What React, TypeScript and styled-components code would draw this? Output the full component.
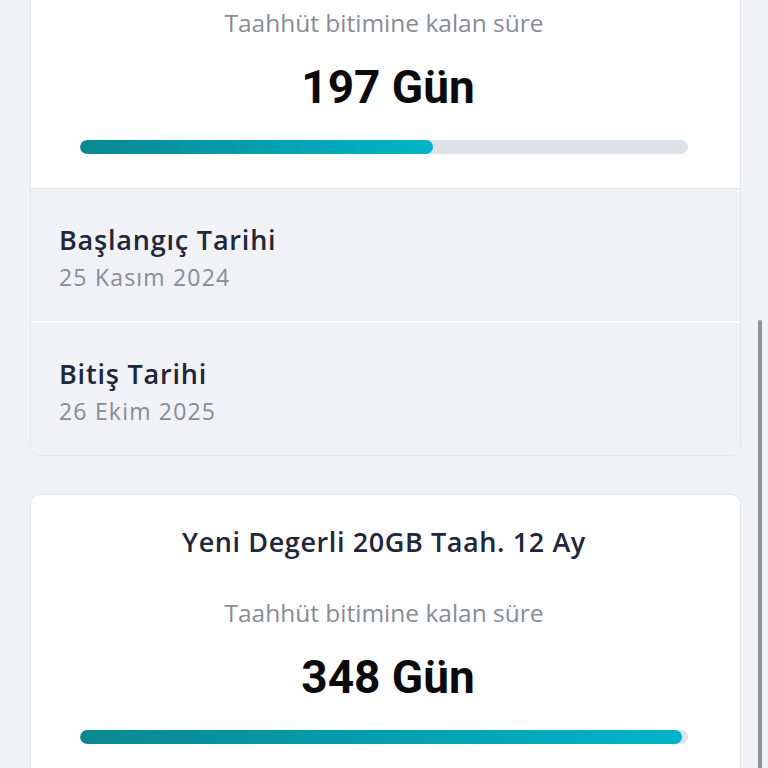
import React from 'react';
import styled, { createGlobalStyle } from 'styled-components';

const GlobalStyle = createGlobalStyle`
  html, body {
    margin: 0;
    padding: 0;
    background: #f0f2f5;
    font-family: 'Open Sans', 'Noto Sans', sans-serif;
    overflow: hidden;
  }
`;

const Page = styled.div`
  position: relative;
  min-height: 100vh;
  padding: 0 27px 40px 30px;
  display: flex;
  flex-direction: column;
  gap: 38px;
`;

const Card = styled.div<{ $clipped?: boolean }>`
  background: #ffffff;
  border: 1px solid #e3e6ec;
  border-radius: ${p => (p.$clipped ? '0 0 10px 10px' : '10px')};
  border-top: ${p => (p.$clipped ? 'none' : '1px solid #e3e6ec')};
  overflow: hidden;
`;

const Summary = styled.div<{ $clipped?: boolean }>`
  display: flex;
  flex-direction: column;
  align-items: center;
  padding: ${p => (p.$clipped ? '7px' : '30px')} 52px 34px 49px;
`;

const PlanTitle = styled.div`
  font-size: 27px;
  line-height: 34px;
  font-weight: 600;
  letter-spacing: 0.6px;
  color: #22263b;
  margin-bottom: 38px;
`;

const Caption = styled.div`
  font-size: 24.5px;
  line-height: 31px;
  color: #878c96;
`;

const Days = styled.div`
  font-family: 'Roboto', 'Liberation Sans', sans-serif;
  font-size: 46px;
  line-height: 55px;
  font-weight: 700;
  color: #0b0b0d;
  margin-top: 22px;
  padding-left: 8px;
`;

const Track = styled.div`
  align-self: stretch;
  height: 14px;
  margin-top: 25px;
  border-radius: 7px;
  background: #dde1ea;
  overflow: hidden;
`;

const Fill = styled.div`
  height: 100%;
  border-radius: 7px;
  background: linear-gradient(90deg, #0a8890 0%, #04a3b4 60%, #00b4c8 100%);
`;

const Details = styled.div`
  background: #f0f2f5;
  border-top: 1px solid #e3e6ec;
`;

const DetailRow = styled.div`
  padding: 35px 28px 29px;
  display: flex;
  flex-direction: column;
  gap: 6px;

  & + & {
    border-top: 2px solid #ffffff;
  }
`;

const Label = styled.div`
  font-size: 27px;
  line-height: 32px;
  font-weight: 600;
  letter-spacing: 0.8px;
  color: #22263b;
`;

const Value = styled.div`
  font-size: 23px;
  line-height: 30px;
  letter-spacing: 1.2px;
  color: #878c96;
`;

const ScrollThumb = styled.div`
  position: fixed;
  right: 6px;
  top: 320px;
  width: 4px;
  height: 520px;
  border-radius: 2px;
  background: #8f8f8f;
`;

type Commitment = {
  title?: string;
  days: number;
  progress: number;
  start?: string;
  end?: string;
};

const items: Commitment[] = [
  { days: 197, progress: 58, start: '25 Kasım 2024', end: '26 Ekim 2025' },
  { title: 'Yeni Degerli 20GB Taah. 12 Ay', days: 348, progress: 99 },
];

const App: React.FC = () => {
  return (
    <>
      <GlobalStyle />
      <Page>
        {items.map((item, i) => {
          const clipped = i === 0;
          return (
            <Card key={i} $clipped={clipped}>
              <Summary $clipped={clipped}>
                {item.title && <PlanTitle>{item.title}</PlanTitle>}
                <Caption>Taahhüt bitimine kalan süre</Caption>
                <Days>{item.days} Gün</Days>
                <Track>
                  <Fill style={{ width: `${item.progress}%` }} />
                </Track>
              </Summary>
              {item.start && (
                <Details>
                  <DetailRow>
                    <Label>Başlangıç Tarihi</Label>
                    <Value>{item.start}</Value>
                  </DetailRow>
                  <DetailRow>
                    <Label>Bitiş Tarihi</Label>
                    <Value>{item.end}</Value>
                  </DetailRow>
                </Details>
              )}
            </Card>
          );
        })}
        <ScrollThumb />
      </Page>
    </>
  );
};

export default App;
